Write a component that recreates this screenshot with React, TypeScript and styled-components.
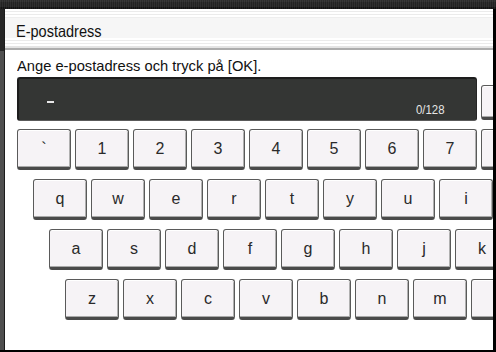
import React from "react";
import styled, { createGlobalStyle } from "styled-components";

const GlobalStyle = createGlobalStyle`
  html, body {
    margin: 0;
    padding: 0;
    background: #000;
  }
  * {
    box-sizing: border-box;
  }
`;

const font = `"Liberation Sans", Arial, sans-serif`;

const Screen = styled.div`
  width: 496px;
  height: 352px;
  overflow: hidden;
  display: flex;
  flex-direction: column;
  background: #000;
  font-family: ${font};
  color: #111;
`;

const TopBand = styled.div`
  height: 9px;
  flex-shrink: 0;
  background:
    repeating-linear-gradient(90deg, rgba(255, 255, 255, 0.06) 0 1px, transparent 1px 2px),
    linear-gradient(to bottom, #2c2c2c 0 2px, #232323 2px 7px, #141414 7px 9px);
`;

const Body = styled.div`
  flex: 1;
  display: flex;
  min-height: 0;
`;

const LeftRail = styled.div`
  width: 5px;
  flex-shrink: 0;
  background: linear-gradient(to bottom, #262626 0 42px, #4f4f4f 42px);
  box-shadow: inset -1px 0 0 #1c1c1c;
`;

const RightRail = styled.div`
  width: 3px;
  flex-shrink: 0;
  background: #000;
`;

const BottomBand = styled.div`
  height: 2px;
  flex-shrink: 0;
  background: #000;
`;

const Main = styled.div`
  flex: 1;
  min-width: 0;
  background: #fff;
  overflow: hidden;
  display: flex;
  flex-direction: column;
`;

const TitleBar = styled.div`
  height: 41px;
  flex-shrink: 0;
  display: flex;
  align-items: center;
  padding: 4px 0 0 11px;
  border-bottom: 2px solid #adadad;
  background: linear-gradient(
    to bottom,
    #fff 0 2px,
    #ebebeb 2px 3px,
    #fff 3px 5px,
    #ebebeb 5px 6px,
    #fff 6px 8px,
    #eeeeee 8px 9px,
    #f6f6f6 9px 29px,
    #fff 29px 31px,
    #ebebeb 31px 32px,
    #fff 32px 34px,
    #ebebeb 34px 35px,
    #fff 35px 37px,
    #e4e4e4 37px 39px
  );
`;

const Narrow = styled.span<{ squeeze?: number }>`
  display: inline-block;
  white-space: nowrap;
  transform: scaleX(${({ squeeze }) => squeeze ?? 0.9});
  transform-origin: left center;
`;

const Title = styled.h1`
  margin: 0;
  font-size: 16.5px;
  font-weight: normal;
  line-height: 20px;
`;

const Prompt = styled.p`
  margin: 0;
  height: 27px;
  padding: 7px 0 0 12px;
  font-size: 15px;
  line-height: 18px;
  white-space: nowrap;
`;

const InputRow = styled.div`
  display: flex;
  gap: 4px;
  padding-left: 12px;
  height: 44px;
  flex-shrink: 0;
`;

const InputBox = styled.div`
  width: 460px;
  flex-shrink: 0;
  height: 44px;
  display: flex;
  justify-content: space-between;
  align-items: flex-end;
  padding: 0 30px 3px 28px;
  background: #343634;
  border-top: 2px solid #1d1d1d;
  border-left: 2px solid #1d1d1d;
  border-right: 1px solid #262626;
  border-bottom: 1px solid #5a5a5a;
  border-radius: 3px;
`;

const Cursor = styled.span`
  align-self: flex-start;
  margin-top: 22px;
  width: 7px;
  height: 2px;
  background: #e8e8e8;
`;

const Counter = styled.span`
  font-size: 12px;
  line-height: 14px;
  color: #e6e6e6;
`;

const keyFace = `
  background: #f6f3f6;
  border: 1px solid #5a5a5a;
  border-bottom: 3px solid #4a4a4a;
  border-radius: 3px;
  box-shadow: inset 0 1px 0 #fff, inset 0 -1px 0 #a9a9a9, inset -1px 0 0 #b0b0b0;
`;

const SideButton = styled.div`
  ${keyFace};
  width: 24px;
  height: 35px;
  margin-top: 8px;
  flex-shrink: 0;
`;

const Keyboard = styled.div`
  margin-top: 8px;
  display: flex;
  flex-direction: column;
  gap: 9px;
`;

const Row = styled.div<{ indent: number }>`
  display: flex;
  gap: 4px;
  padding-left: ${({ indent }) => indent}px;
`;

const Key = styled.button`
  ${keyFace};
  width: 54px;
  height: 41px;
  flex-shrink: 0;
  padding: 0;
  display: flex;
  align-items: center;
  justify-content: center;
  font-family: ${font};
  font-size: 16px;
  font-weight: normal;
  color: #2a2a2a;
`;

// the last key of each row runs off the right edge; its label lies outside the screen
const rows: { indent: number; keys: string[] }[] = [
  { indent: 12, keys: ["`", "1", "2", "3", "4", "5", "6", "7", ""] },
  { indent: 28, keys: ["q", "w", "e", "r", "t", "y", "u", "i", ""] },
  { indent: 44, keys: ["a", "s", "d", "f", "g", "h", "j", "k"] },
  { indent: 60, keys: ["z", "x", "c", "v", "b", "n", "m", ""] },
];

export default function App() {
  return (
    <>
      <GlobalStyle />
      <Screen>
        <TopBand />
        <Body>
          <LeftRail />
          <Main>
            <TitleBar>
              <Title>
                <Narrow squeeze={0.88}>E-postadress</Narrow>
              </Title>
            </TitleBar>
            <Prompt>
              <Narrow squeeze={0.98}>Ange e-postadress och tryck på [OK].</Narrow>
            </Prompt>
            <InputRow>
              <InputBox>
                <Cursor />
                <Counter>
                  <Narrow squeeze={0.95}>0/128</Narrow>
                </Counter>
              </InputBox>
              <SideButton />
            </InputRow>
            <Keyboard>
              {rows.map((row, i) => (
                <Row key={i} indent={row.indent}>
                  {row.keys.map((k, j) => (
                    <Key key={j}>{k}</Key>
                  ))}
                </Row>
              ))}
            </Keyboard>
          </Main>
          <RightRail />
        </Body>
        <BottomBand />
      </Screen>
    </>
  );
}
